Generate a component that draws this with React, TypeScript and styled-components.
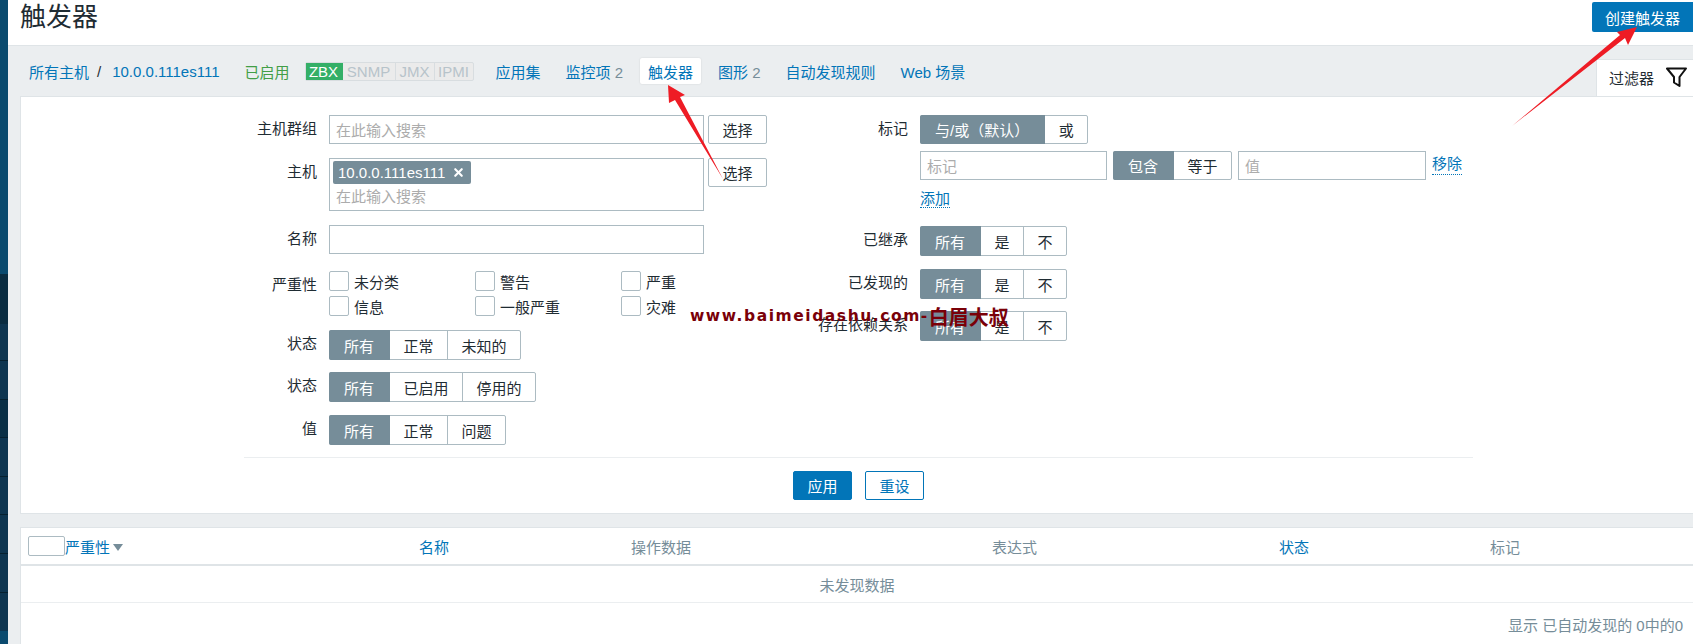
import React from 'react';
import styled, { createGlobalStyle } from 'styled-components';
import { X } from 'lucide-react';

const GlobalStyle = createGlobalStyle`
  html, body {
    margin: 0;
    padding: 0;
    background: #ebeef0;
  }
  * {
    box-sizing: border-box;
  }
`;

const Page = styled.div`
  position: relative;
  display: flex;
  width: 1693px;
  height: 644px;
  overflow: hidden;
  font-family: "Liberation Sans", "Noto Sans CJK SC", sans-serif;
  font-size: 15px;
  color: #1f2c33;
`;

const Sidebar = styled.div`
  display: flex;
  flex-direction: column;
  flex: 0 0 8px;
`;

const SideBlock = styled.div<{ $h: number; $bg: string; $line?: boolean }>`
  flex: 0 0 ${p => p.$h}px;
  background: ${p => p.$bg};
  border-bottom: ${p => (p.$line ? '1px solid #06202f' : 'none')};
`;

const Main = styled.div`
  flex: 1;
  min-width: 0;
  display: flex;
  flex-direction: column;
  background: #ebeef0;
`;

const Header = styled.header`
  flex: 0 0 46px;
  display: flex;
  justify-content: space-between;
  align-items: flex-start;
  padding: 2px 0 0 12px;
  background: #fff;
  border-bottom: 1px solid #dfe4e7;
`;

const Title = styled.h1`
  margin: -3px 0 0;
  font-size: 26px;
  line-height: 36px;
  font-weight: 400;
  color: #1f2c33;
`;

const CreateButton = styled.button`
  width: 101px;
  height: 30px;
  padding: 0;
  border: none;
  border-radius: 2px 0 0 2px;
  background: #0275b8;
  color: #fff;
  font: inherit;
`;

const NavBar = styled.nav`
  flex: 0 0 50px;
  display: flex;
  align-items: center;
  padding: 0 0 0 21px;
  position: relative;
`;

const NavText = styled.span<{ $ml?: number; $color?: string }>`
  margin-left: ${p => p.$ml ?? 0}px;
  color: ${p => p.$color ?? '#0275b8'};
  white-space: nowrap;
`;

const Count = styled.span`
  color: #768d99;
`;

const ActiveTab = styled.span`
  margin-left: 17px;
  height: 26px;
  padding: 0 8px;
  display: flex;
  align-items: center;
  background: #fff;
  color: #0275b8;
  border-radius: 2px;
  box-shadow: 0 0 2px rgba(0, 0, 0, 0.12);
`;

const Availability = styled.div`
  margin-left: 15px;
  display: flex;
  height: 19px;
  border: 1px solid #d8dde0;
  border-radius: 2px;
  background: #ebebeb;
`;

const AvailItem = styled.span<{ $on?: boolean; $w: number }>`
  width: ${p => p.$w}px;
  display: flex;
  align-items: center;
  justify-content: center;
  color: ${p => (p.$on ? '#fff' : '#b7c3ca')};
  background: ${p => (p.$on ? '#34af67' : 'transparent')};
  border-right: 1px solid ${p => (p.$on ? '#34af67' : '#d8dde0')};
  &:last-child {
    border-right: none;
  }
`;

const FilterTab = styled.div`
  margin-left: auto;
  align-self: flex-end;
  width: 97px;
  height: 37px;
  padding: 0 0 2px 12px;
  display: flex;
  align-items: center;
  gap: 12px;
  background: #fff;
  border-left: 1px solid #dfe4e7;
  border-top: 1px solid #dfe4e7;
`;

const FilterPanel = styled.section`
  margin-left: 12px;
  padding-top: 18px;
  background: #fff;
  border: 1px solid #dfe4e7;
  border-right: none;
`;

const Columns = styled.div`
  display: flex;
  padding-left: 223px;
`;

const LeftColumn = styled.div`
  flex: 0 0 526px;
`;

const RightColumn = styled.div`
  flex: 1;
`;

const Row = styled.div<{ $mt?: number }>`
  display: flex;
  align-items: flex-start;
  margin-top: ${p => p.$mt ?? 0}px;
`;

const Label = styled.label<{ $w: number }>`
  flex: 0 0 ${p => p.$w}px;
  margin-right: 12px;
  text-align: right;
  line-height: 28px;
  white-space: nowrap;
`;

const TextInput = styled.div<{ $w: number }>`
  width: ${p => p.$w}px;
  height: 29px;
  padding: 0 6px;
  display: flex;
  align-items: center;
  border: 1px solid #acbbc2;
  background: #fff;
  color: #acacac;
`;

const MultiSelect = styled.div`
  width: 375px;
  height: 53px;
  padding: 2px 3px;
  border: 1px solid #acbbc2;
`;

const Chip = styled.span`
  width: 138px;
  height: 23px;
  padding: 0 6px 0 5px;
  display: flex;
  align-items: center;
  justify-content: space-between;
  background: #768d99;
  color: #fff;
  border-radius: 2px;
`;

const MultiPlaceholder = styled.div`
  margin: 2px 0 0 3px;
  line-height: 22px;
  color: #acacac;
`;

const PickButton = styled.button`
  width: 59px;
  height: 29px;
  margin-left: 4px;
  padding: 0;
  background: #fff;
  border: 1px solid #acbbc2;
  border-radius: 2px;
  color: #1f2c33;
  font: inherit;
`;

const SeverityGrid = styled.div`
  display: grid;
  grid-template-columns: repeat(3, 146px);
  grid-auto-rows: 20px;
  row-gap: 5px;
`;

const CheckItem = styled.span`
  display: flex;
  align-items: center;
  gap: 5px;
  white-space: nowrap;
`;

const CheckBox = styled.span`
  flex: 0 0 20px;
  height: 20px;
  background: #fff;
  border: 1px solid #acbbc2;
  border-radius: 2px;
`;

const Segmented = styled.div<{ $h?: number }>`
  display: flex;
  height: ${p => p.$h ?? 30}px;
  border: 1px solid #acbbc2;
  border-radius: 2px;
  background: #fff;
`;

const Segment = styled.span<{ $active?: boolean }>`
  display: flex;
  align-items: center;
  padding: 0 ${p => (p.$active ? 15 : 13.5)}px;
  margin: ${p => (p.$active ? '-1px 0 -1px -1px' : '0')};
  background: ${p => (p.$active ? '#768d99' : 'transparent')};
  color: ${p => (p.$active ? '#fff' : '#1f2c33')};
  border-right: 1px solid ${p => (p.$active ? '#768d99' : '#acbbc2')};
  border-radius: ${p => (p.$active ? '2px 0 0 2px' : '0')};
  white-space: nowrap;
  &:last-child {
    border-right: none;
  }
`;

const TagInputs = styled.div`
  display: flex;
  align-items: flex-start;
  gap: 6px;
  margin-left: 150px;
`;

const DottedLink = styled.span`
  color: #0275b8;
  line-height: 20px;
  border-bottom: 1px dotted #0275b8;
`;

const RemoveLink = styled(DottedLink)`
  margin-top: 3px;
`;

const AddRow = styled.div`
  margin: 9px 0 0 150px;
  height: 30px;
`;

const Divider = styled.hr`
  margin: 12px 0 0 223px;
  width: 1229px;
  border: none;
  border-top: 1px solid #ebeef0;
`;

const ActionRow = styled.div`
  width: 1229px;
  margin-left: 223px;
  padding: 13px 0;
  display: flex;
  justify-content: center;
  gap: 13px;
`;

const PrimaryButton = styled.button`
  width: 59px;
  height: 29px;
  padding: 0;
  background: #0275b8;
  border: 1px solid #0275b8;
  border-radius: 2px;
  color: #fff;
  font: inherit;
`;

const OutlineButton = styled(PrimaryButton)`
  background: #fff;
  color: #0275b8;
`;

const Table = styled.section`
  flex: 1;
  margin: 13px 0 0 12px;
  background: #fff;
  border-top: 1px solid #dfe4e7;
  border-left: 1px solid #dfe4e7;
`;

const HeadRow = styled.div`
  display: grid;
  grid-template-columns: 37px 354px 212px 361px 287px 211px 1fr;
  align-items: center;
  height: 38px;
  padding-left: 7px;
  border-bottom: 2px solid #dfe4e7;
`;

const HeadCell = styled.span<{ $link?: boolean }>`
  color: ${p => (p.$link ? '#0275b8' : '#768d99')};
  display: flex;
  align-items: center;
`;

const SortArrow = styled.i`
  margin: 2px 0 0 3px;
  border-left: 5px solid transparent;
  border-right: 5px solid transparent;
  border-top: 7px solid #768d99;
`;

const EmptyRow = styled.div`
  height: 37px;
  display: flex;
  align-items: center;
  justify-content: center;
  color: #768d99;
  border-bottom: 1px solid #ebeef0;
`;

const TableFooter = styled.div`
  padding: 11px 10px 0 0;
  text-align: right;
  color: #768d99;
`;

const ArrowLayer = styled.svg`
  position: absolute;
  inset: 0;
  pointer-events: none;
`;

const Watermark = styled.div`
  position: absolute;
  left: 690px;
  top: 303px;
  display: flex;
  align-items: center;
  height: 26px;
  color: #7a0008;
  font-family: "DejaVu Sans", "Noto Sans CJK SC", sans-serif;
  font-weight: 700;
  font-size: 15.5px;
  letter-spacing: 1.55px;
  white-space: nowrap;
`;

const WatermarkCjk = styled.span`
  font-family: "Noto Sans CJK SC", sans-serif;
  font-size: 20px;
  letter-spacing: 0;
`;

const sideBlocks = [
  { h: 274, bg: '#0a4a6e' },
  { h: 50, bg: '#0a2c40' },
  { h: 37, bg: '#0e3550', line: true },
  { h: 39, bg: '#0e3550', line: true },
  { h: 38, bg: '#0a2f45', line: true },
  { h: 39, bg: '#0e3550', line: true },
  { h: 38, bg: '#0e3550', line: true },
  { h: 39, bg: '#0e3550', line: true },
  { h: 39, bg: '#0e3550', line: true },
  { h: 38, bg: '#0e3550' },
  { h: 13, bg: '#0a4a6e' },
];

const severities = ['未分类', '警告', '严重', '信息', '一般严重', '灾难'];

const Options: React.FC<{ items: string[] }> = ({ items }) => (
  <Segmented>
    {items.map((item, i) => (
      <Segment key={item} $active={i === 0}>{item}</Segment>
    ))}
  </Segmented>
);

export default function App() {
  return (
    <Page>
      <GlobalStyle />
      <Sidebar>
        {sideBlocks.map((b, i) => (
          <SideBlock key={i} $h={b.h} $bg={b.bg} $line={b.line} />
        ))}
      </Sidebar>
      <Main>
        <Header>
          <Title>触发器</Title>
          <CreateButton>创建触发器</CreateButton>
        </Header>
        <NavBar>
          <NavText>所有主机</NavText>
          <NavText $ml={8} $color="#1f2c33">/</NavText>
          <NavText $ml={11}>10.0.0.111es111</NavText>
          <NavText $ml={25} $color="#429e47">已启用</NavText>
          <Availability>
            <AvailItem $on $w={37}>ZBX</AvailItem>
            <AvailItem $w={53}>SNMP</AvailItem>
            <AvailItem $w={39}>JMX</AvailItem>
            <AvailItem $w={38}>IPMI</AvailItem>
          </Availability>
          <NavText $ml={22}>应用集</NavText>
          <NavText $ml={25}>监控项 <Count>2</Count></NavText>
          <ActiveTab>触发器</ActiveTab>
          <NavText $ml={17}>图形 <Count>2</Count></NavText>
          <NavText $ml={25}>自动发现规则</NavText>
          <NavText $ml={25}>Web 场景</NavText>
          <FilterTab>
            过滤器
            <svg width="21" height="20" viewBox="0 0 21 20" fill="none" stroke="#111" strokeWidth="2" strokeLinejoin="round">
              <path d="M1 1.5H20L13.5 10V19L8 15.5V10Z" />
            </svg>
          </FilterTab>
        </NavBar>
        <FilterPanel>
          <Columns>
            <LeftColumn>
              <Row>
                <Label $w={73}>主机群组</Label>
                <TextInput $w={375}>在此输入搜索</TextInput>
                <PickButton>选择</PickButton>
              </Row>
              <Row $mt={14}>
                <Label $w={73}>主机</Label>
                <MultiSelect>
                  <Chip>10.0.0.111es111<X size={13} strokeWidth={4} /></Chip>
                  <MultiPlaceholder>在此输入搜索</MultiPlaceholder>
                </MultiSelect>
                <PickButton>选择</PickButton>
              </Row>
              <Row $mt={14}>
                <Label $w={73}>名称</Label>
                <TextInput $w={375} />
              </Row>
              <Row $mt={17}>
                <Label $w={73}>严重性</Label>
                <SeverityGrid>
                  {severities.map(s => (
                    <CheckItem key={s}><CheckBox />{s}</CheckItem>
                  ))}
                </SeverityGrid>
              </Row>
              <Row $mt={14}>
                <Label $w={73}>状态</Label>
                <Options items={['所有', '正常', '未知的']} />
              </Row>
              <Row $mt={12}>
                <Label $w={73}>状态</Label>
                <Options items={['所有', '已启用', '停用的']} />
              </Row>
              <Row $mt={13}>
                <Label $w={73}>值</Label>
                <Options items={['所有', '正常', '问题']} />
              </Row>
            </LeftColumn>
            <RightColumn>
              <Row>
                <Label $w={138}>标记</Label>
                <Segmented $h={29}>
                  <Segment $active>与/或（默认）</Segment>
                  <Segment>或</Segment>
                </Segmented>
              </Row>
              <Row $mt={7}>
                <TagInputs>
                  <TextInput $w={187}>标记</TextInput>
                  <Segmented $h={29}>
                    <Segment $active>包含</Segment>
                    <Segment>等于</Segment>
                  </Segmented>
                  <TextInput $w={188}>值</TextInput>
                  <RemoveLink>移除</RemoveLink>
                </TagInputs>
              </Row>
              <AddRow><DottedLink>添加</DottedLink></AddRow>
              <Row $mt={7}>
                <Label $w={138}>已继承</Label>
                <Options items={['所有', '是', '不']} />
              </Row>
              <Row $mt={13}>
                <Label $w={138}>已发现的</Label>
                <Options items={['所有', '是', '不']} />
              </Row>
              <Row $mt={12}>
                <Label $w={138}>存在依赖关系</Label>
                <Options items={['所有', '是', '不']} />
              </Row>
            </RightColumn>
          </Columns>
          <Divider />
          <ActionRow>
            <PrimaryButton>应用</PrimaryButton>
            <OutlineButton>重设</OutlineButton>
          </ActionRow>
        </FilterPanel>
        <Table>
          <HeadRow>
            <CheckBox />
            <HeadCell $link>严重性<SortArrow /></HeadCell>
            <HeadCell $link>名称</HeadCell>
            <HeadCell>操作数据</HeadCell>
            <HeadCell>表达式</HeadCell>
            <HeadCell $link>状态</HeadCell>
            <HeadCell>标记</HeadCell>
          </HeadRow>
          <EmptyRow>未发现数据</EmptyRow>
          <TableFooter>显示 已自动发现的 0中的0</TableFooter>
        </Table>
      </Main>
      <ArrowLayer width="1693" height="644" viewBox="0 0 1693 644">
        <polygon points="668,85 685,95 680,97 723,179 675,100 669,103" fill="#ee1c25" />
        <polygon points="1637,27 1628,45 1625,38 1512,126 1620,35 1617,32" fill="#ee1c25" />
      </ArrowLayer>
      <Watermark>www.baimeidashu.com-<WatermarkCjk>白眉大叔</WatermarkCjk></Watermark>
    </Page>
  );
}
